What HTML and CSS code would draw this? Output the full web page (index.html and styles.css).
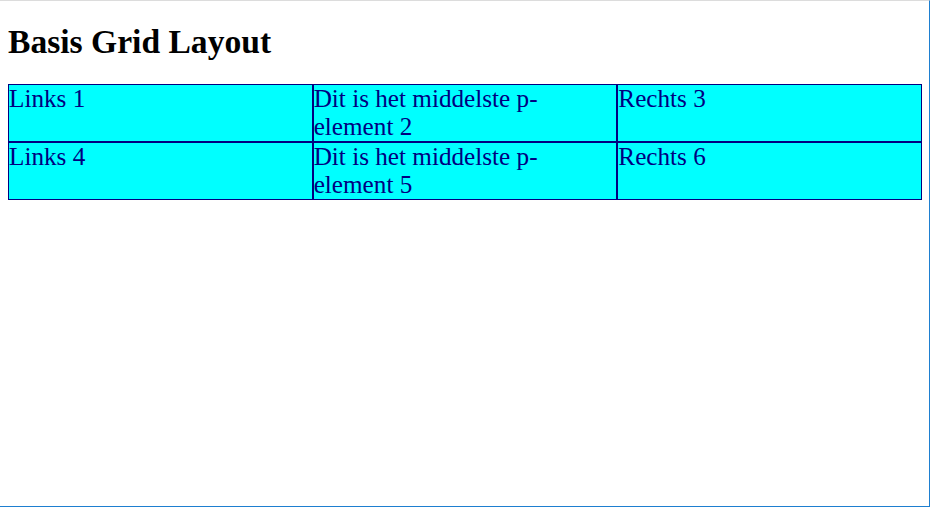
FILE: index.html
```html
<!DOCTYPE html>
<html>
<head>
<meta charset="utf-8">
<title>Basis Grid Layout</title>
<link rel="stylesheet" href="styles.css">
</head>
<body>
<h1 class="title">Basis Grid Layout</h1>
<div class="grid">
  <p class="cell">Links 1</p>
  <p class="cell">Dit is het middelste p-element 2</p>
  <p class="cell">Rechts 3</p>
  <p class="cell">Links 4</p>
  <p class="cell">Dit is het middelste p-element 5</p>
  <p class="cell">Rechts 6</p>
</div>
</body>
</html>
```

FILE: styles.css
```css
html {
  font-family: "Liberation Serif", "Times New Roman", serif;
}
body {
  margin: 0 8px 8px;
  padding: 0;
}
body::after {
  content: "";
  position: fixed;
  inset: 0;
  border-top: 1px solid #dcdcdc;
  border-right: 1px solid #1e7fd0;
  border-bottom: 1px solid #1e7fd0;
  pointer-events: none;
}
.title {
  font-size: 33.6px;
  line-height: 38.6px;
  font-weight: bold;
  margin: 22.5px 0;
  color: #000;
}
.grid {
  display: grid;
  grid-template-columns: 1fr 1fr 1fr;
}
.cell {
  margin: 0;
  font-size: 25.2px;
  line-height: 28px;
  color: #000080;
  background: #00ffff;
  border: 1px solid #000080;
}
```
